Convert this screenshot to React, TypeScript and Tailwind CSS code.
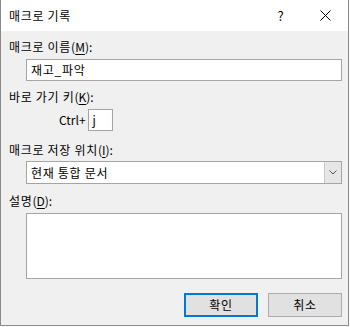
import React from 'react';

const font = { fontFamily: '"Noto Sans CJK KR", "Noto Sans", sans-serif' };

const Label: React.FC<{ text: string; mnemonic: string; className?: string }> = ({ text, mnemonic, className }) => (
  <div className={`h-[16px] leading-[16px] text-[12px] text-[#000] ${className ?? ''}`}>
    <span className="tracking-[0.7px]">{text}</span>(<span className="underline underline-offset-2">{mnemonic}</span>):
  </div>
);

export default function App() {
  return (
    <div style={font} className="w-[350px] h-[327px] bg-white">
      <div className="w-[349px] h-[326px] flex flex-col border-r border-b border-l border-[#8a8a8a] bg-[#f0f0f0]">
        {/* title bar */}
        <div className="h-[31px] bg-white flex items-center shrink-0">
          <div className="pl-[8px] text-[12px] tracking-[0.7px] text-black flex-1">매크로 기록</div>
          <div className="w-[45px] h-full flex items-center justify-center text-[13px] text-black">?</div>
          <div className="w-[45px] h-full flex items-center justify-center">
            <svg width="11" height="11" viewBox="0 0 11 11">
              <path d="M0.5 0.5 L10.5 10.5 M10.5 0.5 L0.5 10.5" stroke="#000" strokeWidth="1" fill="none" />
            </svg>
          </div>
        </div>

        <div className="flex flex-col pl-[8px] pr-[6px] pt-[8px]">
          <Label text="매크로 이름" mnemonic="M" />
          <div className="mt-[4px] ml-[17px] h-[22px] bg-white border border-[#a5a5a5] flex items-center pl-[4px] text-[12px] tracking-[0.7px] text-black">
            재고_파악
          </div>

          <Label text="바로 가기 키" mnemonic="K" className="mt-[8px]" />
          <div className="mt-[4px] flex items-center h-[22px]">
            <span className="ml-[50px] text-[12px] text-black">Ctrl+</span>
            <div className="ml-[2px] w-[25px] h-[22px] bg-white border border-[#a5a5a5] flex items-center pl-[4px] text-[12px] text-black">
              j
            </div>
          </div>

          <Label text="매크로 저장 위치" mnemonic="I" className="mt-[11px]" />
          <div className="mt-[3px] ml-[17px] h-[23px] bg-white border border-[#a5a5a5] flex items-stretch">
            <div className="flex-1 flex items-center pl-[4px] text-[12px] tracking-[0.7px] text-black">현재 통합 문서</div>
            <div className="w-[17px] bg-[#e6e6e6] border-l border-[#c8c8c8] flex items-center justify-center">
              <svg width="8" height="5" viewBox="0 0 8 5">
                <path d="M0.5 0.5 L4 4 L7.5 0.5" stroke="#555" strokeWidth="1" fill="none" />
              </svg>
            </div>
          </div>

          <Label text="설명" mnemonic="D" className="mt-[9px]" />
          <div className="mt-[4px] ml-[17px] h-[66px] bg-white border border-[#a5a5a5]" />

          <div className="mt-[14px] flex justify-end gap-[10px]">
            <div className="w-[74px] h-[24px] bg-[#e1e1e1] border-2 border-[#0078d7] flex items-center justify-center text-[12px] tracking-[0.7px] text-black">
              확인
            </div>
            <div className="w-[74px] h-[24px] bg-[#e1e1e1] border border-[#adadad] flex items-center justify-center text-[12px] tracking-[0.7px] text-black">
              취소
            </div>
          </div>
        </div>
      </div>
    </div>
  );
}
